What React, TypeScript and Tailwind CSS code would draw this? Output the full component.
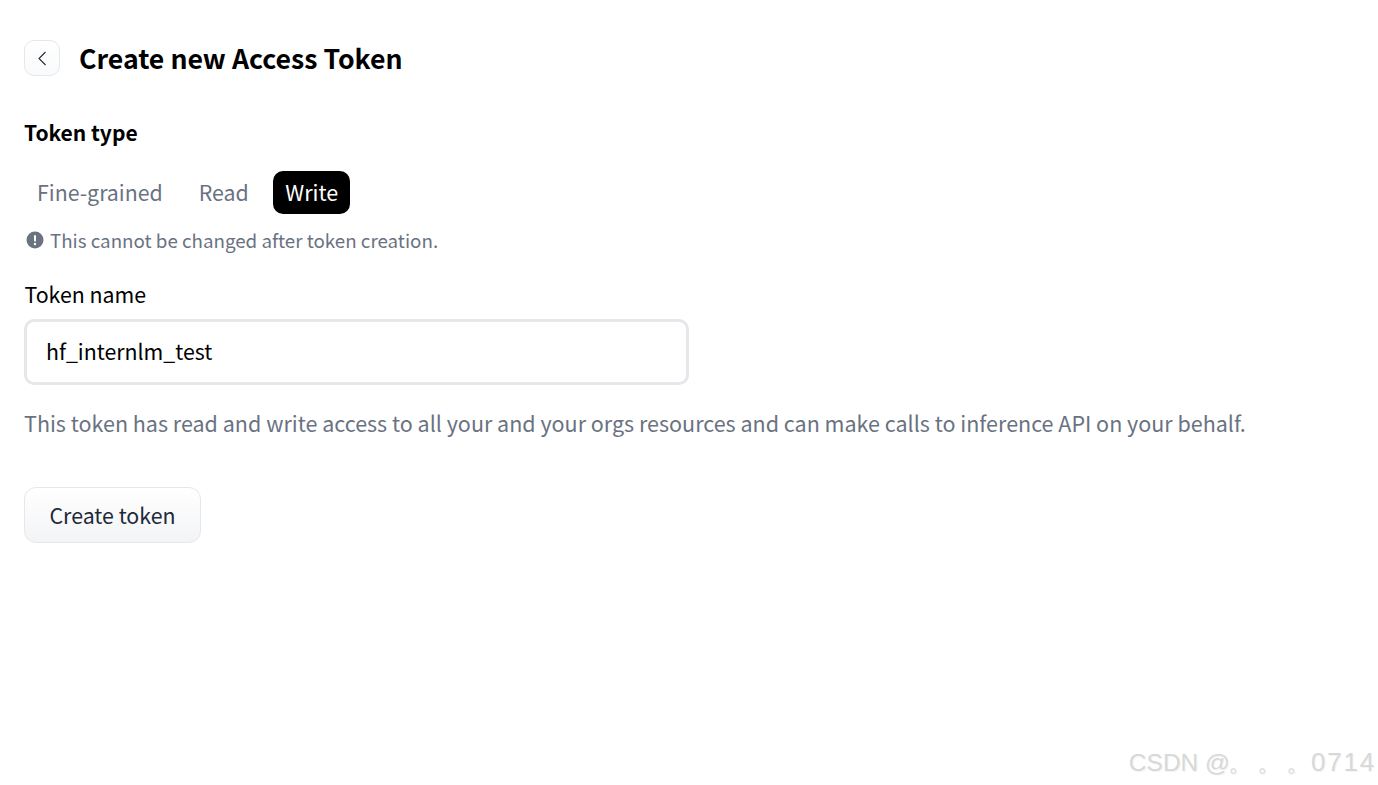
const font = "[font-family:'Noto_Sans_CJK_SC','Source_Sans_Pro',sans-serif]";

function Back() {
  return (
    <button className="flex h-9 w-9 items-center justify-center rounded-[10px] border border-gray-200 bg-gradient-to-b from-white to-gray-50">
      <svg width="16" height="16" viewBox="0 0 16 16" fill="none" stroke="#1f2937" strokeWidth="1.1">
        <path d="M11.500 2 5 8.500 11.500 15" />
      </svg>
    </button>
  );
}

export default function App() {
  return (
    <div className={`relative h-[785px] w-[1378px] overflow-hidden bg-white pl-6 pt-10 ${font}`}>
      <div className="flex h-9 items-center gap-[19px]">
        <Back />
        <h1 className="text-[26.67px] font-bold leading-9 text-black">Create new Access Token</h1>
      </div>
      <div className="mt-[38px] text-[21px] font-semibold leading-[36px] text-black">Token type</div>
      <div className="mt-[21px] flex h-[43px] items-center text-[21.33px] leading-[41px] text-gray-500">
        <span className="pb-[2px] pl-[13px] pr-3">Fine-grained</span>
        <span className="ml-[12px] px-3 pb-[2px]">Read</span>
        <span className="ml-3 rounded-[10px] bg-black pb-[2px] pl-[12.5px] pr-[11.5px] text-[21.5px] text-white">Write</span>
      </div>
      <div className="mt-[12px] flex h-[28px] items-center gap-[6px] pl-[2px] text-[18.75px] leading-[28px] text-gray-500">
        <svg width="18" height="18" viewBox="0 0 18 18">
          <circle cx="9" cy="9" r="8.500" fill="#6b7280" />
          <rect x="8" y="4" width="2" height="6.500" rx="1" fill="#fff" />
          <circle cx="9" cy="13" r="1.200" fill="#fff" />
        </svg>
        <span>This cannot be changed after token creation.</span>
      </div>
      <label className="mt-[26px] block pl-[0.5px] text-[21.33px] leading-[28px] text-black">Token name</label>
      <div className="mt-[11px] flex h-[66px] w-[665px] items-center rounded-[10px] border-[3px] border-gray-200 bg-white pb-[2px] pl-[19px] text-[21.33px] text-black">
        hf_internlm_test
      </div>
      <p className="mt-[22px] text-[21.5px] leading-[32px] text-gray-500">
        This token has read and write access to all your and your orgs resources and can make calls to inference API on your behalf.
      </p>
      <button className="mt-[48px] flex h-[56px] w-[177px] items-center justify-center rounded-[12px] border border-gray-200 bg-gradient-to-b from-white to-gray-100 text-[21.33px] text-gray-800">
        Create token
      </button>
      <div className="absolute right-[2px] top-[745px] flex items-baseline font-['Liberation_Sans',sans-serif] leading-[34px] text-[#d8d8d8] [text-shadow:1px_1px_0_#f4f4f4]">
        <span className="text-[24.5px]">CSDN @</span>
        <span className="ml-[-2px] text-[24.5px] tracking-[4px]">。。。</span>
        <span className="ml-[-4px] text-[26px] tracking-[1.8px]">0714</span>
      </div>
    </div>
  );
}
